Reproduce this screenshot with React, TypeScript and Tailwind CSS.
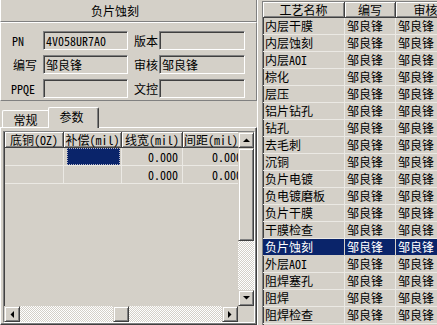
import React from 'react';

const raised =
  'border border-t-[#d4d0c8] border-l-[#d4d0c8] border-r-[#404040] border-b-[#404040] shadow-[inset_1px_1px_0_#ffffff,inset_-1px_-1px_0_#808080]';
const sunken =
  'border border-t-[#808080] border-l-[#808080] border-r-white border-b-white shadow-[inset_1px_1px_0_#404040,inset_-1px_-1px_0_#d4d0c8]';
const checker =
  'bg-[repeating-conic-gradient(#ffffff_0%_25%,#d4d0c8_0%_50%)] bg-[length:2px_2px]';
const headCell =
  'shrink-0 h-full flex items-center whitespace-nowrap overflow-hidden border-r border-b border-r-[#404040] border-b-[#404040] shadow-[inset_1px_1px_0_#ffffff,inset_-1px_-1px_0_#808080]';

const processes = [
  '内层干膜', '内层蚀刻', '内层AOI', '棕化', '层压', '铝片钻孔', '钻孔', '去毛刺', '沉铜',
  '负片电镀', '负电镀磨板', '负片干膜', '干膜检查', '负片蚀刻', '外层AOI', '阻焊塞孔', '阻焊', '阻焊检查',
];

function Arrow({ dir }: { dir: 'up' | 'down' | 'left' | 'right' }) {
  const pts = {
    up: '0,4 7,4 3.5,0.5',
    down: '0,0 7,0 3.5,3.5',
    left: '4,0 4,7 0.5,3.5',
    right: '0,0 0,7 3.5,3.5',
  }[dir];
  const vertical = dir === 'up' || dir === 'down';
  return (
    <svg width={vertical ? 7 : 4} height={vertical ? 4 : 7} viewBox={vertical ? '0 0 7 4' : '0 0 4 7'}>
      <polygon points={pts} fill="#000" />
    </svg>
  );
}

function ScrollBtn({ dir }: { dir: 'up' | 'down' | 'left' | 'right' }) {
  return (
    <div className={`w-[16px] h-[16px] shrink-0 flex items-center justify-center bg-[#d4d0c8] ${raised}`}>
      <Arrow dir={dir} />
    </div>
  );
}

function Field({ label, value, labelW }: { label: string; value?: string; labelW: string }) {
  return (
    <>
      <div className={`${labelW} shrink-0 whitespace-nowrap`}>{label}</div>
      <div className={`h-[19px] flex items-center px-[2px] bg-[#d4d0c8] ${sunken}`}>{value}</div>
    </>
  );
}

export default function App() {
  const cols = [
    { t: '底铜(OZ)', w: 'w-[59px]', a: 'justify-center' },
    { t: '补偿(mil)', w: 'w-[58px]', a: 'justify-center' },
    { t: '线宽(mil)', w: 'w-[61px]', a: 'justify-center' },
    { t: '间距(mil)', w: 'w-[64px]', a: 'justify-start pl-[1px]' },
  ];

  return (
    <div
      className="w-[437px] h-[325px] bg-[#d4d0c8] flex overflow-hidden text-[12px] leading-[14px] text-black"
      style={{ fontFamily: '"Noto Sans Mono CJK SC", "Noto Sans CJK SC", "Liberation Mono", monospace' }}
    >
      {/* left panel */}
      <div className="w-[257px] shrink-0 flex flex-col">
        <div className="h-[22px] shrink-0 flex items-center pl-[90px] border-l border-l-white border-r border-r-[#808080] border-b border-b-[#808080]">
          负片蚀刻
        </div>
        <div className="h-[79px] shrink-0 border border-t-white border-l-white border-r-[#808080] border-b-[#808080] pt-[8px] pl-[9px] pr-[3px]">
          <div className="grid grid-cols-[33px_85px_31px_86px] grid-rows-[19px_19px_19px] gap-x-0 gap-y-[5px] items-center">
            <Field label="PN" value="4V058UR7A0" labelW="pl-[3px] ml-[-1px]" />
            <div className="pl-[6px] col-start-3">版本</div>
            <div className={`h-[19px] bg-[#d4d0c8] ${sunken}`} />
            <Field label="编写" value="邹良锋" labelW="pl-[3px]" />
            <div className="pl-[6px]">审核</div>
            <div className={`h-[19px] flex items-center px-[2px] bg-[#d4d0c8] ${sunken}`}>邹良锋</div>
            <Field label="PPQE" labelW="pl-[1px]" />
            <div className="pl-[6px]">文控</div>
            <div className={`h-[19px] bg-[#d4d0c8] ${sunken}`} />
          </div>
        </div>

        {/* tabs */}
        <div className="h-[26px] shrink-0 flex items-end pl-[2px]">
          <div className="w-[46px] h-[17px] flex justify-center pt-[2px] border-t border-l border-t-white border-l-white rounded-tl-[2px]">
            常规
          </div>
          <div className="relative z-10 w-[51px] h-[21px] -mb-[1px] bg-[#d4d0c8] flex justify-center pt-[2px] pr-[4px] border-t border-l border-r border-t-white border-l-white border-r-[#404040] rounded-t-[2px] shadow-[inset_-1px_0_0_#808080]">
            参数
          </div>
        </div>

        {/* tab sheet */}
        <div className="flex-1 min-h-0 flex flex-col border border-t-white border-l-white border-r-[#404040] border-b-[#404040] shadow-[inset_-1px_-1px_0_#808080] pt-[3px] pl-[2px] pr-[1px] pb-[1px]">
          <div className={`flex-1 min-h-0 flex flex-col ${sunken}`}>
            <div className="flex flex-1 min-h-0">
              <div className="flex-1 min-w-0 overflow-hidden pl-[1px]">
                <div className="flex h-[16px]">
                  {cols.map((c) => (
                    <div key={c.t} className={`${headCell} ${c.w} ${c.a}`}>{c.t}</div>
                  ))}
                </div>
                {[0, 1].map((r) => (
                  <div key={r} className="flex h-[18px]">
                    {cols.map((c, i) => (
                      <div
                        key={c.t}
                        className={`${c.w} shrink-0 h-full border-r border-b border-[#ebe9e4] flex items-center justify-end pr-[4px] whitespace-nowrap`}
                      >
                        {r === 0 && i === 1 ? (
                          <div className="w-full h-full -mr-[3px] bg-[#0a246a] outline-1 outline-dotted outline-[#b8b8c8] -outline-offset-1" />
                        ) : i >= 2 ? (
                          '0.000'
                        ) : null}
                      </div>
                    ))}
                  </div>
                ))}
              </div>
              <div className="w-[16px] shrink-0 flex flex-col">
                <ScrollBtn dir="up" />
                <div className={`h-[93px] shrink-0 bg-[#d4d0c8] ${raised}`} />
                <div className={`flex-1 ${checker}`} />
                <ScrollBtn dir="down" />
              </div>
            </div>
            <div className="h-[16px] shrink-0 flex">
              <div className="flex-1 flex">
                <ScrollBtn dir="left" />
                <div className={`w-[93px] shrink-0 ${checker}`} />
                <div className={`w-[16px] shrink-0 bg-[#d4d0c8] ${raised}`} />
                <div className={`flex-1 ${checker}`} />
                <ScrollBtn dir="right" />
              </div>
              <div className="w-[16px] shrink-0" />
            </div>
          </div>
        </div>
      </div>

      {/* splitter */}
      <div className="w-[5px] shrink-0 border-l border-l-white" />

      {/* right grid */}
      <div className="flex-1 min-w-0 pt-[1px]">
        <div className={`h-[330px] overflow-hidden border-r-0 ${sunken}`}>
          <div className="flex h-[16px]">
            <div className={`${headCell} justify-center w-[82px]`}>工艺名称</div>
            <div className={`${headCell} justify-center w-[51px]`}>编写</div>
            <div className={`${headCell} justify-center w-[60px]`}>审核</div>
          </div>
          {processes.map((p) => {
            const sel = p === '负片蚀刻';
            const cell = `shrink-0 h-full flex items-center pl-[2px] whitespace-nowrap border-r border-b ${
              sel ? 'bg-[#0a246a] text-white border-[#d4d0c8]' : 'border-[#ebe9e4]'
            }`;
            return (
              <div key={p} className="flex h-[17px]">
                <div className={`${cell} w-[82px]`}>{p}</div>
                <div className={`${cell} w-[51px]`}>邹良锋</div>
                <div className={`${cell} w-[60px]`}>邹良锋</div>
              </div>
            );
          })}
        </div>
      </div>
    </div>
  );
}
